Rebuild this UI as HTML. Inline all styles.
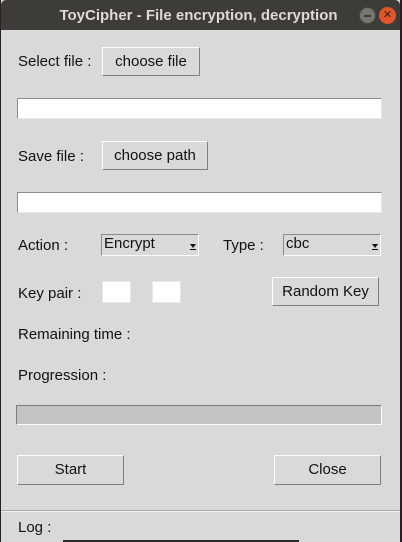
<!DOCTYPE html>
<html><head><style>
body{margin:0;width:402px;height:542px;overflow:hidden;background:#2a1f28;font-family:"Liberation Sans","DejaVu Sans",sans-serif;position:relative}
.win{position:absolute;left:1px;top:0;width:399px;height:542px;background:#d9d9d9}
.tb{position:absolute;left:0;top:0;width:399px;height:30px;background:#3d3c38;border-radius:5px 5px 0 0;color:#dfdbd2;font-weight:bold;font-size:15px;line-height:32px;text-align:center;text-indent:-4px}
.a{position:absolute;font-size:15px;color:#111;white-space:nowrap}
.btn{position:absolute;box-sizing:border-box;border:1px solid;border-color:#fff #7f7f7f #7f7f7f #fff;background:#d9d9d9;font-size:15px;text-align:center;color:#111}
.ent{position:absolute;box-sizing:border-box;background:#fff;border:1px solid;border-color:#8c8c8c #e8e8e8 #e8e8e8 #8c8c8c}
.cb{position:absolute;box-sizing:border-box;border:1px solid;border-color:#8c8c8c #fff #fff #8c8c8c;font-size:15px;padding-left:2px;line-height:18px;color:#111}
.cb i{position:absolute;right:2px;top:9px;width:0;height:0;border-left:3px solid transparent;border-right:3px solid transparent;border-top:4px solid #111}
.cb b{position:absolute;right:2px;top:14px;width:6px;height:1px;background:#111}
.circ{position:absolute;top:7px;width:17px;height:17px;border-radius:50%}
</style></head><body>
<div class="win">
<div class="tb">ToyCipher - File encryption, decryption</div>
<div class="circ" style="left:358px;background:#77766f;border:1px solid #4a4944;box-sizing:border-box"><div style="position:absolute;left:4px;top:7px;width:7px;height:1.5px;background:#3d3c38"></div></div>
<div class="circ" style="left:378px;background:#e0552a;color:#3a1f14;font-size:11px;line-height:17px;text-align:center;font-weight:bold">✕</div>

<div class="a" style="left:17px;top:53px">Select file :</div>
<div class="btn" style="left:101px;top:47px;width:98px;height:29px;line-height:27px">choose file</div>
<div class="ent" style="left:16px;top:98px;width:365px;height:21px"></div>

<div class="a" style="left:17px;top:148px">Save file :</div>
<div class="btn" style="left:101px;top:141px;width:106px;height:29px;line-height:27px">choose path</div>
<div class="ent" style="left:16px;top:192px;width:365px;height:21px"></div>

<div class="a" style="left:17px;top:237px">Action :</div>
<div class="cb" style="left:100px;top:234px;width:98px;height:22px">Encrypt<i></i><b></b></div>
<div class="a" style="left:222px;top:237px">Type :</div>
<div class="cb" style="left:282px;top:234px;width:98px;height:22px">cbc<i></i><b></b></div>

<div class="a" style="left:17px;top:285px">Key pair :</div>
<div class="ent" style="left:101px;top:281px;width:29px;height:22px;border-color:#e8e8e8"></div>
<div class="ent" style="left:151px;top:281px;width:29px;height:22px;border-color:#e8e8e8"></div>
<div class="btn" style="left:271px;top:277px;width:107px;height:29px;line-height:27px">Random Key</div>

<div class="a" style="left:17px;top:326px">Remaining time :</div>
<div class="a" style="left:17px;top:367px">Progression :</div>
<div style="position:absolute;left:15px;top:405px;width:366px;height:20px;box-sizing:border-box;background:#c3c3c3;border:1px solid;border-color:#7a7a7a #fff #fff #7a7a7a"></div>

<div class="btn" style="left:16px;top:455px;width:107px;height:30px;line-height:28px">Start</div>
<div class="btn" style="left:273px;top:455px;width:107px;height:30px;line-height:28px">Close</div>

<div style="position:absolute;left:0;top:510px;width:399px;height:1px;background:#a8a8a8"></div>
<div style="position:absolute;left:0;top:511px;width:399px;height:1px;background:#f0f0f0"></div>
<div class="a" style="left:17px;top:519px">Log :</div>
<div style="position:absolute;left:62px;top:540px;width:236px;height:2px;background:#2a2a2a"></div>
</div>
</body></html>
